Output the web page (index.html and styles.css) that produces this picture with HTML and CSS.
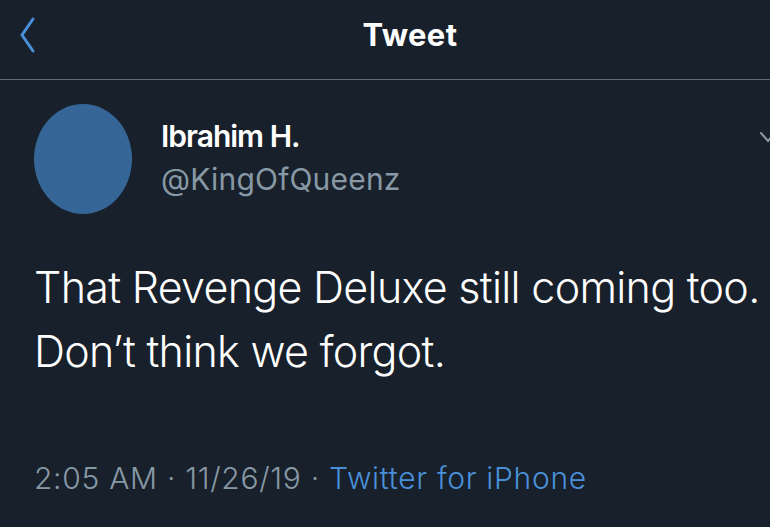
FILE: index.html
```html
<!DOCTYPE html>
<html lang="en">
<head>
    <meta charset="UTF-8">
    <title>Tweet</title>
    <link rel="stylesheet" href="styles.css">
</head>
<body>
<div class="page">
    <header class="top-bar">
        <svg class="back" width="18" height="38" viewBox="0 0 18 38">
            <path d="M15 3 L4 19 L15 35" fill="none" stroke="#4a90d9" stroke-width="3" stroke-linecap="round" stroke-linejoin="round"/>
        </svg>
        <h1 class="title">Tweet</h1>
    </header>
    <section class="tweet">
        <div class="author">
            <div class="avatar"></div>
            <div class="names">
                <div class="name">Ibrahim H.</div>
                <div class="handle">@KingOfQueenz</div>
            </div>
            <svg class="caret" width="16" height="12" viewBox="0 0 16 12">
                <path d="M1 1 L8 9 L15 1" fill="none" stroke="#8899a6" stroke-width="2" stroke-linecap="round"/>
            </svg>
        </div>
        <p class="text">That Revenge Deluxe still coming too. Don’t think we forgot.</p>
        <div class="meta">2:05 AM · 11/26/19 · <span class="source">Twitter for iPhone</span></div>
    </section>
</div>
</body>
</html>
```
FILE: styles.css
```css
*{
    margin: 0;
    padding: 0;
}
body{
    background: #18202b;
    font-family: Inter, "Liberation Sans", Arial, sans-serif;
    color: #fff;
}
.page{
    width: 770px;
    height: 527px;
    overflow: hidden;
}
.top-bar{
    position: relative;
    height: 79px;
    border-bottom: 1px solid #5f6a75;
    display: flex;
    justify-content: center;
}
.back{
    position: absolute;
    left: 18px;
    top: 16px;
}
.title{
    font-size: 31px;
    font-weight: bold;
    line-height: 36px;
    padding-top: 17px;
    letter-spacing: 0.4px;
    margin-left: 50px;
}
.tweet{
    padding: 24px 0 0 34px;
}
.author{
    display: flex;
    align-items: flex-start;
    position: relative;
}
.avatar{
    width: 98px;
    height: 110px;
    border-radius: 50%;
    background: #356697;
    flex-shrink: 0;
}
.names{
    margin-left: 29px;
    padding-top: 14px;
}
.name{
    font-size: 30px;
    font-weight: 600;
    line-height: 36px;
    letter-spacing: -1px;
}
.handle{
    font-size: 30px;
    color: #8899a6;
    line-height: 36px;
    margin-top: 7px;
    letter-spacing: 0.2px;
}
.caret{
    position: absolute;
    left: 726px;
    top: 28px;
}
.text{
    margin-top: 41px;
    font-size: 43px;
    font-weight: 300;
    line-height: 64px;
    width: 736px;
    letter-spacing: -0.7px;
}
.meta{
    margin-top: 77px;
    font-size: 30px;
    font-weight: 300;
    line-height: 36px;
    color: #8899a6;
    letter-spacing: 0.7px;
}
.source{
    color: #4a90d9;
}
```
